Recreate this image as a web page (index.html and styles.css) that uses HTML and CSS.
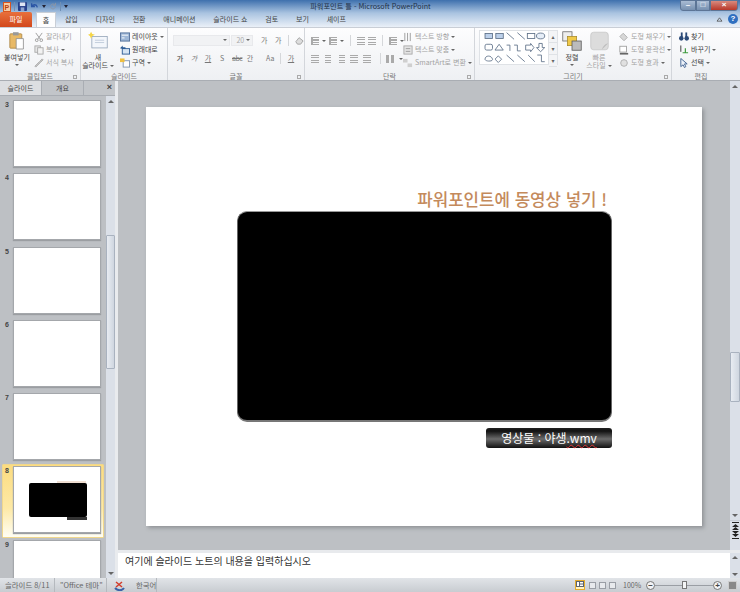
FILE: index.html
```html
<!DOCTYPE html>
<html lang="ko">
<head>
    <meta charset="UTF-8">
    <title>파워포인트 틀 - Microsoft PowerPoint</title>
    <link rel="stylesheet" href="styles.css">
</head>
<body>
<div class="app">

    <!-- 제목 표시줄 -->
    <div class="titlebar">
        <div class="qat">
            <svg width="8" height="10" viewBox="0 0 8 10"><rect width="8" height="10" fill="#d8551f"/><rect x="1" y="1" width="6" height="8" fill="#f6c9a0"/><text x="1.500" y="8" class="logoletter">P</text></svg>
            <span class="qatsep"></span>
            <svg width="9" height="9" viewBox="0 0 10 10"><rect width="10" height="10" rx="1" fill="#27408b"/><rect x="2" y="0.500" width="6" height="4" fill="#dfe6f4"/><rect x="3" y="6" width="4" height="4" fill="#8fa3cf"/></svg>
            <svg width="9" height="9" viewBox="0 0 11 10"><path d="M2 1v4h4M2 5c2-3 6-3 7 1" fill="none" stroke="#2a55a5" stroke-width="1.600"/></svg>
            <span class="qatarrow"></span>
            <svg width="8" height="9" viewBox="0 0 10 10"><path d="M8 5a3 3 0 1 1-1-2.300M8 0.500v3H5" fill="none" stroke="#8d97a5" stroke-width="1.200"/></svg>
            <span class="qatsep"></span>
            <span class="qatarrow"></span>
        </div>
        <div class="doctitle">파워포인트 틀 - Microsoft PowerPoint</div>
        <div class="winbtns">
            <span class="winbtn minbtn">&ndash;</span>
            <span class="winbtn maxbtn">&#9633;</span>
            <span class="winbtn closebtn">&times;</span>
        </div>
    </div>

    <!-- 리본 탭 -->
    <div class="tabs">
        <span class="filetab">파일</span>
        <span class="tab activetab">홈</span>
        <span class="tab">삽입</span>
        <span class="tab">디자인</span>
        <span class="tab">전환</span>
        <span class="tab">애니메이션</span>
        <span class="tab">슬라이드 쇼</span>
        <span class="tab">검토</span>
        <span class="tab">보기</span>
        <span class="tab">셰이프</span>
        <span class="tabright">
            <svg width="7" height="5" viewBox="0 0 8 6"><path d="M1 5l3-4 3 4z" fill="none" stroke="#555" stroke-width="1"/></svg>
            <span class="help">?</span>
        </span>
    </div>

    <!-- 리본 -->
    <div class="ribbon">
        <div class="group clipgroup">
            <div class="groupbody">
                <div class="bigbtn">
                    <svg width="16" height="20" viewBox="0 0 20 24"><rect x="1" y="3" width="15" height="18" rx="1" fill="#e8b966" stroke="#a98443"/><rect x="5" y="1" width="7" height="4" fill="#999"/><path d="M9 9h9v13H9z" fill="#fff" stroke="#8c8c8c"/></svg>
                    <span>붙여넣기</span>
                    <span class="caret"></span>
                </div>
                <div class="rows dim">
                    <div class="row"><svg viewBox="0 0 11 11"><path d="M2 1l5 7M9 1L4 8" stroke="#999" fill="none"/><circle cx="3" cy="9" r="1.500" fill="none" stroke="#999"/><circle cx="8" cy="9" r="1.500" fill="none" stroke="#999"/></svg>잘라내기</div>
                    <div class="row"><svg viewBox="0 0 11 11"><rect x="1" y="1" width="6" height="7" fill="#e6e6e6" stroke="#aaa"/><rect x="4" y="3" width="6" height="7" fill="#f2f2f2" stroke="#aaa"/></svg>복사 <span class="caret"></span></div>
                    <div class="row"><svg viewBox="0 0 11 11"><path d="M1 9l5-5 3-3 1 1-3 3-5 5z" fill="#c9c9c9" stroke="#aaa"/></svg>서식 복사</div>
                </div>
            </div>
            <div class="grouplabel">클립보드<span class="launcher"></span></div>
        </div>

        <div class="group slidegroup">
            <div class="groupbody">
                <div class="bigbtn">
                    <svg width="20" height="20" viewBox="0 0 26 24"><rect x="5" y="6" width="20" height="15" fill="#f3f6fb" stroke="#8fa0b5"/><path d="M9 11h12M9 14h12" stroke="#b5c2d4"/><path d="M4 0l1.500 3L9 4 5.500 5.500 4 9 2.500 5.500 0 4l2.500-1z" fill="#f5d545"/></svg>
                    <span class="twoline">새<br>슬라이드 <i class="caret"></i></span>
                </div>
                <div class="rows">
                    <div class="row"><svg viewBox="0 0 11 10"><rect x="0.500" y="0.500" width="10" height="9" fill="#9db6d6" stroke="#53709a"/><path d="M2 3h7M2 6h3" stroke="#fff"/></svg>레이아웃 <span class="caret"></span></div>
                    <div class="row"><svg viewBox="0 0 11 10"><rect x="2.500" y="3.500" width="8" height="6" fill="#d6e4f3" stroke="#2c5b95"/><path d="M0 3l3-3v2h3v2H3z" fill="#2c5b95"/></svg>원래대로</div>
                    <div class="row"><svg viewBox="0 0 11 10"><rect x="3.500" y="2.500" width="7" height="7" fill="#fff" stroke="#7f93ad"/><rect x="0" y="0" width="5" height="4" fill="#f0c040"/></svg>구역 <span class="caret"></span></div>
                </div>
            </div>
            <div class="grouplabel">슬라이드</div>
        </div>

        <div class="group fontgroup">
            <div class="groupbody fontbody">
                <div class="fontrow toprow">
                    <span class="combo fontname"><span class="caret"></span></span>
                    <span class="combo fontsize">20<span class="caret"></span></span>
                    <span class="glyph growbtn">가</span>
                    <span class="glyph">가</span>
                    <span class="vsep"></span>
                    <svg width="9" height="9" viewBox="0 0 11 11"><path d="M1 7l4-5 5 4-3 4H3z" fill="#ddd" stroke="#999"/></svg>
                </div>
                <div class="fontrow">
                    <span class="glyph bold">가</span>
                    <span class="glyph italic">가</span>
                    <span class="glyph under">가</span>
                    <span class="glyph">S</span>
                    <span class="glyph strike">abc</span>
                    <span class="glyph">간</span>
                    <span class="glyph casebtn">Aa</span>
                    <span class="vsep"></span>
                    <span class="glyph under">가</span>
                </div>
            </div>
            <div class="grouplabel">글꼴<span class="launcher"></span></div>
        </div>

        <div class="group paragroup">
            <div class="groupbody parabody">
                <div class="paraicons">
                    <div class="pararow">
                        <span class="lines bullets"></span><span class="caret"></span>
                        <span class="lines bullets"></span><span class="caret"></span>
                        <span class="vsep"></span>
                        <span class="lines"></span>
                        <span class="lines"></span>
                        <span class="vsep"></span>
                        <span class="lines bullets"></span><span class="caret"></span>
                    </div>
                    <div class="pararow alignrow">
                        <span class="lines"></span>
                        <span class="lines lcenter"></span>
                        <span class="lines lright"></span>
                        <span class="lines"></span>
                        <span class="lines"></span>
                        <span class="vsep"></span>
                        <span class="lines columns"></span><span class="caret"></span>
                    </div>
                </div>
                <div class="rows dim">
                    <div class="row"><svg viewBox="0 0 11 11"><path d="M2 1v9M5 1v9M8 1v9" stroke="#999"/></svg>텍스트 방향 <span class="caret"></span></div>
                    <div class="row"><svg viewBox="0 0 11 11"><rect x="1" y="1" width="9" height="9" fill="#e4e4e4" stroke="#aaa"/><path d="M3 4h5M3 7h5" stroke="#999"/></svg>텍스트 맞춤 <span class="caret"></span></div>
                    <div class="row"><svg viewBox="0 0 11 11"><rect x="0" y="1" width="5" height="4" fill="#cfcfcf"/><rect x="5" y="6" width="5" height="4" fill="#cfcfcf"/></svg>SmartArt로 변환 <span class="caret"></span></div>
                </div>
            </div>
            <div class="grouplabel">단락<span class="launcher"></span></div>
        </div>

        <div class="group drawgroup">
            <div class="groupbody drawbody">
                <div class="shapes">
                    <svg width="69" height="34" viewBox="0 0 76 41" fill="none" stroke="#5a6d85">
                        <rect x="3" y="3" width="9" height="6" fill="#bcd0ea"/><rect x="16" y="3" width="9" height="6" fill="#bcd0ea"/>
                        <path d="M29 2l9 8M42 2l9 8"/><rect x="54" y="3" width="9" height="6" fill="#fff"/><ellipse cx="70" cy="6" rx="5" ry="3.500" fill="#e6eef8"/>
                        <rect x="3" y="16" width="9" height="7" rx="2"/><path d="M20 16l5 7h-10z"/><path d="M29 17h4v7M38 17h4v7h4"/><path d="M52 17h6v-2l4 5-4 5v-2h-6z"/><path d="M68 15h4v5h3l-5 5-5-5h3z"/>
                        <path d="M3 34c0-5 8-5 9 0 1 3-9 3-9 0zM19 30l4 4-4 4-4-4z"/><path d="M29 29l9 8M42 29l9 8"/><path d="M55 29l8 8"/><path d="M66 29h5v8h4"/>
                    </svg>
                    <div class="shapescroll"><i>&#9652;</i><i>&#9662;</i><i>&#9662;</i></div>
                </div>
                <div class="bigbtn arrange">
                    <svg width="20" height="20" viewBox="0 0 26 26"><rect x="1" y="1" width="12" height="12" fill="#eee" stroke="#666"/><rect x="7" y="7" width="12" height="12" fill="#f0c948" stroke="#a88a2c"/><rect x="13" y="13" width="12" height="12" fill="#bbb" stroke="#555"/></svg>
                    <span>정렬</span>
                    <span class="caret"></span>
                </div>
                <div class="bigbtn quick dim">
                    <svg width="19" height="20" viewBox="0 0 26 26"><rect x="1" y="1" width="24" height="24" rx="4" fill="#dcdcdc" stroke="#c4c4c4"/><path d="M25 16l-9 9c2-5 4-8 9-9z" fill="#bdbdbd"/></svg>
                    <span class="twoline">빠른<br>스타일 <i class="caret"></i></span>
                </div>
                <div class="rows dim">
                    <div class="row"><svg viewBox="0 0 12 11"><path d="M5 1l5 5-4 4-5-5z" fill="#d8d8d8" stroke="#aaa"/></svg>도형 채우기 <span class="caret"></span></div>
                    <div class="row"><svg viewBox="0 0 12 11"><rect x="1" y="1" width="8" height="7" fill="#fff" stroke="#999"/><path d="M1 10h10" stroke="#666" stroke-width="2"/></svg>도형 윤곽선 <span class="caret"></span></div>
                    <div class="row"><svg viewBox="0 0 12 11"><circle cx="6" cy="5.500" r="4" fill="#e0e0e0" stroke="#aaa"/></svg>도형 효과 <span class="caret"></span></div>
                </div>
            </div>
            <div class="grouplabel">그리기<span class="launcher"></span></div>
        </div>

        <div class="group editgroup">
            <div class="groupbody">
                <div class="rows">
                    <div class="row"><svg viewBox="0 0 11 10"><circle cx="2.500" cy="6.500" r="2.500" fill="#2b4a78"/><circle cx="8.500" cy="6.500" r="2.500" fill="#2b4a78"/><rect x="2" y="0" width="2" height="5" fill="#2b4a78"/><rect x="7" y="0" width="2" height="5" fill="#2b4a78"/></svg>찾기</div>
                    <div class="row"><svg viewBox="0 0 11 10"><path d="M2 0v7" stroke="#333"/><path d="M4 8h6M7 3v5" stroke="#3d9a3d" stroke-width="1.300" fill="none"/></svg>바꾸기 <span class="caret"></span></div>
                    <div class="row"><svg viewBox="0 0 11 10"><path d="M2 0v9l2.500-2 1.500 3 1.500-1-1.500-3h3z" fill="#eef3fa" stroke="#3d5f8f"/></svg>선택 <span class="caret"></span></div>
                </div>
            </div>
            <div class="grouplabel">편집</div>
        </div>
    </div>

    <!-- 작업 영역 -->
    <div class="workspace">
        <div class="sidepanel">
            <div class="panetabs">
                <span class="panetab activepane">슬라이드</span>
                <span class="panetab">개요</span>
                <span class="paneclose">&times;</span>
            </div>
            <div class="thumbarea">
                <div class="thumblist">
                    <div class="thumbrow"><span class="num">3</span><div class="thumb"></div></div>
                    <div class="thumbrow"><span class="num">4</span><div class="thumb"></div></div>
                    <div class="thumbrow"><span class="num">5</span><div class="thumb"></div></div>
                    <div class="thumbrow"><span class="num">6</span><div class="thumb"></div></div>
                    <div class="thumbrow"><span class="num">7</span><div class="thumb"></div></div>
                    <div class="thumbrow selected"><span class="num">8</span>
                        <div class="thumb">
                            <span class="mini-title"></span>
                            <span class="mini-video"></span>
                            <span class="mini-caption"></span>
                        </div>
                    </div>
                    <div class="thumbrow"><span class="num">9</span><div class="thumb"></div></div>
                </div>
                <div class="vscroll">
                    <span class="arrow up"></span>
                    <span class="track"><span class="knob sideknob"></span></span>
                    <span class="arrow down"></span>
                </div>
            </div>
        </div>
        <div class="splitter"></div>
        <div class="mainpane">
            <div class="stagewrap">
                <div class="stage">
                    <div class="slide">
                        <div class="slidetitle">파워포인트에 동영상 넣기 !</div>
                        <div class="video"></div>
                        <div class="caption">영상물 : 야생<span class="typo">.wmv</span></div>
                    </div>
                </div>
                <div class="vscroll mainscroll">
                    <span class="arrow up"></span>
                    <span class="track"><span class="knob mainknob"></span></span>
                    <span class="arrow down"></span>
                    <span class="pagebtn pagefirst"><svg width="7" height="8" viewBox="0 0 7 8"><path d="M3.500 2L0 5h7zM3.500 5L0 8h7z" fill="#222"/><path d="M0 0.500h7" stroke="#222"/></svg></span>
                    <span class="pagebtn"><svg width="7" height="8" viewBox="0 0 7 8"><path d="M0 0h7L3.500 3zM0 3h7L3.500 6z" fill="#222"/><path d="M0 7.500h7" stroke="#222"/></svg></span>
                </div>
            </div>
            <div class="notes">
                <div class="notestext">여기에 슬라이드 노트의 내용을 입력하십시오</div>
                <div class="vscroll notescroll">
                    <span class="arrow up"></span>
                    <span class="track"></span>
                    <span class="arrow down"></span>
                </div>
            </div>
        </div>
    </div>

    <!-- 상태 표시줄 -->
    <div class="statusbar">
        <span class="stat slidecount">슬라이드 8/11</span>
        <span class="stat themename">"Office 테마"</span>
        <span class="stat spell"><svg width="12" height="11" viewBox="0 0 12 11"><path d="M2 8c3 3 7 3 9 0" fill="none" stroke="#3a62a8" stroke-width="2"/><path d="M3 2l6 5M9 2L3 7" stroke="#d23b2a" stroke-width="1.500"/></svg></span>
        <span class="stat langname">한국어</span>
        <span class="statright">
            <span class="viewbtn viewactive"><svg width="8" height="6" viewBox="0 0 8 6"><rect x="0.500" y="0.500" width="7" height="5" fill="#fff" stroke="#5c6470"/><path d="M3.500 0v6M3.500 3H8" stroke="#5c6470"/></svg></span>
            <span class="viewbtn"></span>
            <span class="viewbtn"></span>
            <span class="viewbtn"></span>
            <span class="zoomtext">100%</span>
            <span class="zoomround">&minus;</span>
            <span class="zoomtrack"><span class="zoomknob"></span></span>
            <span class="zoomround">+</span>
            <span class="fitbtn"></span>
        </span>
    </div>
</div>
</body>
</html>
```

FILE: styles.css
```css
* {box-sizing: border-box;}

html, body {
    margin: 0;
    height: 100%;
    overflow: hidden;
}

body {
    font-family: "Noto Sans CJK KR", "Liberation Sans", sans-serif;
    font-size: 7px;
    color: #555;
}

.app {
    width: 740px;
    height: 592px;
    display: flex;
    flex-direction: column;
    background: #bdc0c4;
}

/* Title bar */
.titlebar {
    height: 13px;
    display: flex;
    align-items: center;
    justify-content: space-between;
    padding: 0 2px 0 3px;
    background: linear-gradient(#3e70ad, #a9c3e0);
}

.qat {
    display: flex;
    align-items: center;
    gap: 3px;
    width: 250px;
}

.logoletter {
    font: bold 7px "Liberation Sans", sans-serif;
    fill: #b8400f;
}

.qatsep {
    width: 1px;
    height: 9px;
    background: #6f8fb5;
}

.qatarrow {
    width: 0;
    height: 0;
    border: 2px solid transparent;
    border-top: 3px solid #223;
    border-bottom: 0;
}

.doctitle {
    font-size: 7.200px;
    color: #1f2f45;
    line-height: 13px;
    white-space: nowrap;
}

.winbtns {
    width: 250px;
    display: flex;
    justify-content: flex-end;
    align-self: flex-start;
}

.winbtn {
    height: 11px;
    background: linear-gradient(#a9bcd4, #7690b0);
    border: 1px solid #5c7596;
    color: #fff;
    font: bold 8px/8px "Liberation Sans", sans-serif;
    text-align: center;
}

.minbtn {width: 16px; border-radius: 0 0 0 3px;}
.maxbtn {width: 14px;}

.closebtn {
    width: 28px;
    background: linear-gradient(#d98a7e, #b8382a);
    border-radius: 0 0 3px 0;
}

/* Tabs */
.tabs {
    height: 15px;
    display: flex;
    align-items: flex-end;
    background: linear-gradient(#a9c3e0, #eaf0f8);
    border-bottom: 1px solid #c9ced6;
}

.filetab {
    width: 32px;
    height: 15px;
    margin-right: 4px;
    background: linear-gradient(#e8703c, #d2481c);
    color: #fff;
    line-height: 15px;
    text-align: center;
    border-radius: 2px 2px 0 0;
}

.tab {
    height: 15px;
    line-height: 15px;
    padding: 0 8.900px;
    color: #444;
    white-space: nowrap;
}

.activetab {
    width: 20px;
    padding: 0;
    text-align: center;
    background: #fdfdfe;
    border: 1px solid #c9ced6;
    border-bottom: 0;
}

.tabright {
    margin-left: auto;
    display: flex;
    align-items: center;
    gap: 5px;
    padding: 0 2px 3px 0;
}

.help {
    width: 10px;
    height: 10px;
    border-radius: 50%;
    background: #2f6fc0;
    color: #fff;
    font: bold 8px/10px "Liberation Sans", sans-serif;
    text-align: center;
}

/* Ribbon */
.ribbon {
    height: 53px;
    display: flex;
    background: linear-gradient(#fdfdfe, #eef0f3);
    border-bottom: 1px solid #a9adb3;
}

.group {
    display: flex;
    flex-direction: column;
    border-right: 1px solid #d3d6db;
}

.clipgroup {width: 81px;}
.slidegroup {width: 87px;}
.fontgroup {width: 137px;}
.paragroup {width: 170px;}
.drawgroup {width: 197px;}
.editgroup {width: 58px; border-right: 0;}

.groupbody {
    flex: 1;
    min-height: 0;
    display: flex;
    gap: 2px;
    padding: 2px 0 0 2px;
}

.slidegroup .groupbody {gap: 7px;}
.editgroup .groupbody {padding-left: 7px;}

.grouplabel {
    height: 8px;
    line-height: 8px;
    text-align: center;
    color: #777;
    position: relative;
}

.launcher {
    position: absolute;
    right: 3px;
    bottom: 1px;
    width: 4px;
    height: 4px;
    border: 1px solid #aaa;
}

.bigbtn {
    width: 30px;
    padding-top: 1px;
    display: flex;
    flex-direction: column;
    align-items: center;
    line-height: 8px;
    white-space: nowrap;
    color: #444;
}

.bigbtn svg {
    display: block;
    margin-bottom: 2px;
}

.bigbtn .caret {
    margin-top: 3px;
}

.bigbtn i.caret {
    margin-top: 0;
}

.twoline {
    text-align: center;
}

.rows {
    display: flex;
    flex-direction: column;
    gap: 2px;
    padding-top: 1px;
}

.row {
    height: 11px;
    line-height: 11px;
    display: flex;
    align-items: center;
    gap: 2px;
    white-space: nowrap;
    color: #444;
}

.row svg {
    width: 10px;
    height: 10px;
    flex: none;
}

.dim, .dim .row, .dim span {
    color: #a3a3a3;
}

.caret {
    display: inline-block;
    width: 0;
    height: 0;
    border: 2px solid transparent;
    border-top: 2px solid #666;
    border-bottom: 0;
    vertical-align: middle;
    flex: none;
}

/* Font group */
.fontbody {
    flex-direction: column;
    gap: 6px;
    padding: 6px 0 0 5px;
}

.fontrow {
    display: flex;
    align-items: center;
    gap: 6px;
    height: 12px;
    padding-left: 3px;
}

.toprow {
    padding-left: 0;
}

.combo {
    height: 11px;
    display: flex;
    align-items: center;
    justify-content: space-between;
    padding: 0 2px 0 4px;
    background: #f1f2f4;
    border: 1px solid #e8e9ec;
    color: #aaa;
    line-height: 9px;
}

.fontname {
    width: 58px;
    margin-right: -5px;
    justify-content: flex-end;
}

.fontsize {width: 22px;}

.glyph {
    width: 8px;
    color: #777;
    white-space: nowrap;
    text-align: center;
}

.bold {font-weight: bold;}
.italic {font-style: italic;}
.under {text-decoration: underline;}
.strike {text-decoration: line-through; letter-spacing: -0.500px;}
.casebtn {margin-left: 6px;}
.growbtn {margin-left: 1px;}

.vsep {
    width: 1px;
    height: 11px;
    background: #d5d7da;
    flex: none;
}

/* Paragraph group */
.parabody {
    gap: 0;
    padding-left: 6px;
}

.paraicons {
    width: 92px;
    padding-top: 4px;
    display: flex;
    flex-direction: column;
    gap: 5px;
}

.pararow {
    display: flex;
    align-items: center;
    gap: 3px;
    height: 13px;
}

.pararow .vsep {
    margin: 0 3px;
}

.alignrow {
    gap: 5px;
}

.alignrow .vsep {
    margin: 0 0 0 4px;
}

.lines {
    width: 8px;
    height: 8px;
    flex: none;
    background: repeating-linear-gradient(#aaa 0 1px, transparent 1px 2.500px);
}

.bullets {
    border-left: 2px dotted #aaa;
}

.lcenter {padding: 0 1px; background-clip: content-box;}
.lright {border-left: 2px solid transparent; background-clip: padding-box;}
.columns {background: repeating-linear-gradient(90deg, #aaa 0 3px, transparent 3px 5px);}

/* Drawing group */
.drawbody {
    padding-left: 4px;
    gap: 4px;
}

.shapes {
    display: flex;
    flex: none;
    width: 79px;
    height: 35px;
    border: 1px solid #dfe2e6;
    background: #fff;
    justify-content: space-between;
}

.shapescroll {
    width: 9px;
    display: flex;
    flex-direction: column;
    border-left: 1px solid #dfe2e6;
}

.shapescroll i {
    flex: 1;
    font: normal 6px/11px "DejaVu Sans", sans-serif;
    text-align: center;
    color: #666;
    background: #f3f4f6;
    border-bottom: 1px solid #dfe2e6;
}

.arrange {width: 20px;}

.quick {
    width: 20px;
    margin: 0 4px 0 3px;
}

.drawbody .rows {
    margin-left: 2px;
}

/* Workspace */
.workspace {
    height: 497px;
    display: flex;
}

.sidepanel {
    width: 115px;
    flex: none;
    display: flex;
    flex-direction: column;
}

.panetabs {
    height: 15px;
    display: flex;
    background: #c2c5c9;
    border-bottom: 1px solid #a9adb3;
}

.panetab {
    width: 42px;
    line-height: 14px;
    text-align: center;
    color: #444;
    border-right: 1px solid #a9adb3;
}

.activepane {
    background: #dcdee1;
}

.paneclose {
    margin-left: auto;
    padding-right: 3px;
    font: bold 9px/13px "Liberation Sans", sans-serif;
    color: #444;
}

.thumbarea {
    flex: 1;
    display: flex;
    min-height: 0;
}

.thumblist {
    width: 106px;
    height: 482px;
    overflow: hidden;
    padding-top: 2px;
}

.thumbrow {
    height: 73.300px;
    margin: 0 2px;
    padding: 1px 0 0 2px;
    display: flex;
    gap: 2px;
    border: 1px solid transparent;
    border-radius: 1px;
}

.num {
    width: 6px;
    padding-top: 1px;
    font: bold 7px "Liberation Sans", sans-serif;
    color: #444;
}

.thumb {
    position: relative;
    width: 88px;
    height: 67px;
    background: #fff;
    border: 1px solid #a4a7ab;
    box-shadow: 0 1px 1px #9b9ea2;
}

.selected {
    background: linear-gradient(#fcdc80, #fde9a6 60%, #fffef4);
    border-color: #f0d78c;
}

.mini-title {
    position: absolute;
    left: 43px;
    top: 14px;
    width: 29px;
    height: 2px;
    background: #f0dfd2;
}

.mini-video {
    position: absolute;
    left: 15px;
    top: 16px;
    width: 58px;
    height: 34px;
    background: #000;
    border-radius: 2px;
}

.mini-caption {
    position: absolute;
    left: 53px;
    top: 50px;
    width: 20px;
    height: 3px;
    background: #333;
}

/* Scroll bars */
.vscroll {
    width: 9px;
    flex: none;
    display: flex;
    flex-direction: column;
    background: #dbe0e8;
}

.arrow {
    height: 10px;
    flex: none;
    display: flex;
    align-items: center;
    justify-content: center;
}

.arrow::before {
    content: "";
    border: 3px solid transparent;
}

.up::before {
    border-bottom: 3px solid #666;
    border-top: 0;
}

.down::before {
    border-top: 3px solid #666;
    border-bottom: 0;
}

.track {
    flex: 1;
    position: relative;
}

.knob {
    position: absolute;
    left: 0;
    right: 0;
    background: linear-gradient(90deg, #e8ecf2, #cfd6e0);
    border: 1px solid #a9b2bf;
    border-radius: 1px;
}

.sideknob {
    top: 129px;
    height: 134px;
}

.mainknob {
    top: 261px;
    height: 50px;
}

.splitter {
    width: 3px;
    flex: none;
    background: #e9ebee;
}

/* Slide area */
.mainpane {
    flex: 1;
    min-width: 0;
    display: flex;
    flex-direction: column;
}

.stagewrap {
    height: 472px;
    flex: none;
    display: flex;
    border-bottom: 3px solid #e8eaed;
}

.stage {
    flex: 1;
    padding: 26px 0 0 28px;
}

.slide {
    position: relative;
    width: 556px;
    height: 419px;
    background: #fff;
    box-shadow: 2px 2px 4px #8f9296;
}

.slidetitle {
    position: absolute;
    right: 95px;
    top: 81px;
    font-size: 16.800px;
    font-weight: 500;
    line-height: 22px;
    color: #c48a5c;
    white-space: nowrap;
}

.video {
    position: absolute;
    left: 91px;
    top: 104px;
    width: 375px;
    height: 211px;
    background: #000;
    border-radius: 10px;
    border: 1px solid #666;
    border-top-color: #999;
    border-bottom: 2px solid #777;
}

.caption {
    position: absolute;
    left: 340px;
    top: 321px;
    width: 126px;
    height: 20px;
    border-radius: 3px;
    background: linear-gradient(#222, #111 15%, #6b6b6b 55%, #111);
    color: #fff;
    font-size: 12px;
    line-height: 20px;
    text-align: center;
    white-space: nowrap;
}

.typo {
    text-decoration: underline wavy #d33 1px;
}

.mainscroll {
    width: 10px;
}

.pagebtn {
    height: 10px;
    flex: none;
    display: flex;
    align-items: center;
    justify-content: center;
}

.pagefirst {
    border-top: 1px solid #c9ced6;
}

.pagebtn + .pagebtn {
    margin-bottom: 10px;
}

.notes {
    height: 25px;
    flex: none;
    display: flex;
    background: #fff;
}

.notestext {
    flex: 1;
    padding-left: 7px;
    font-size: 10px;
    line-height: 16px;
    color: #333;
}

.notescroll {
    width: 10px;
}

.notescroll .arrow {
    height: 8px;
}

/* Status bar */
.statusbar {
    height: 14px;
    display: flex;
    align-items: center;
    background: linear-gradient(#e1e4e8, #c8ccd1);
    color: #666;
    line-height: 14px;
    font-size: 7.400px;
}

.stat {
    height: 14px;
    flex: none;
    padding-left: 5px;
    border-right: 1px solid #b5b9be;
    white-space: nowrap;
}

.slidecount {width: 55px;}
.themename {width: 52px;}

.spell {
    width: 24px;
    display: flex;
    align-items: center;
    padding-left: 6px;
    border-right: 0;
}

.langname {width: 26px;}

.statright {
    margin-left: auto;
    display: flex;
    align-items: center;
    gap: 4px;
    padding-right: 3px;
}

.viewbtn {
    width: 7px;
    height: 7px;
    margin-right: -1px;
    border: 1px solid #9a9ea5;
    background: #e8eaed;
}

.viewactive {
    width: 10px;
    height: 10px;
    margin-right: 0;
    display: flex;
    background: #fff2c2;
    border-color: #e6ad2e;
}

.zoomtext {
    width: 18px;
    margin-left: 4px;
    margin-right: 1px;
    white-space: nowrap;
    font-size: 7px;
}

.zoomround {
    width: 9px;
    height: 9px;
    border: 1px solid #777;
    border-radius: 50%;
    background: #f2f3f5;
    font: bold 8px/7px "Liberation Sans", sans-serif;
    text-align: center;
    color: #444;
}

.zoomtrack {
    width: 58px;
    height: 1px;
    margin: 0 -4px;
    background: #9a9ea4;
    position: relative;
}

.zoomknob {
    position: absolute;
    left: 27px;
    top: -4px;
    width: 5px;
    height: 8px;
    background: #f4f5f6;
    border: 1px solid #777;
}

.fitbtn {
    width: 9px;
    height: 9px;
    margin-left: 2px;
    background: #888;
    border: 1px solid #ccc;
}
```
